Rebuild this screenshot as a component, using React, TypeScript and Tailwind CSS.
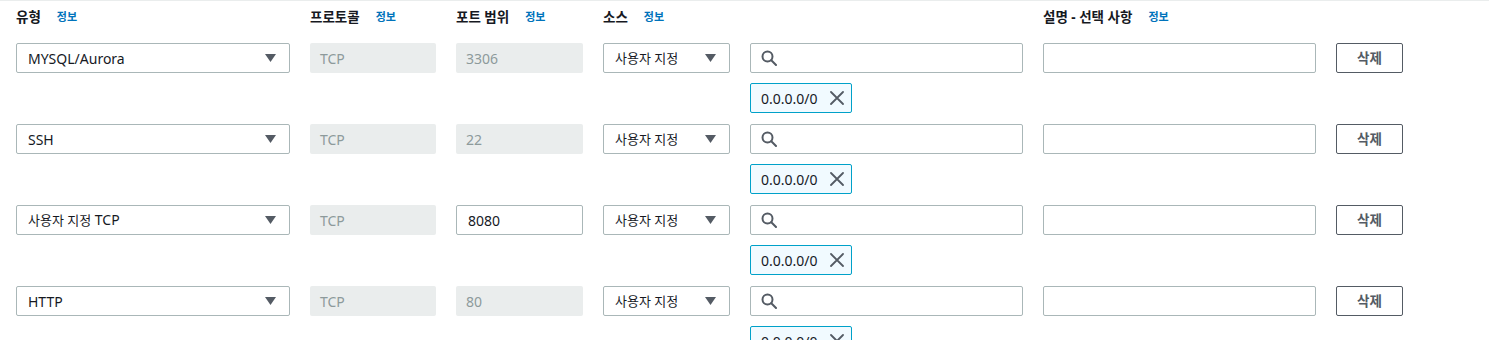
import React from 'react';

type Rule = {
    type: string;
    typeSuffix?: string;
    protocol: string;
    port: string;
    portEditable: boolean;
    cidr: string;
};

const rules: Rule[] = [
    { type: 'MYSQL/Aurora', protocol: 'TCP', port: '3306', portEditable: false, cidr: '0.0.0.0/0' },
    { type: 'SSH', protocol: 'TCP', port: '22', portEditable: false, cidr: '0.0.0.0/0' },
    { type: '사용자 지정', typeSuffix: 'TCP', protocol: 'TCP', port: '8080', portEditable: true, cidr: '0.0.0.0/0' },
    { type: 'HTTP', protocol: 'TCP', port: '80', portEditable: false, cidr: '0.0.0.0/0' },
];

const gridCols = 'grid grid-cols-[274px_126px_127px_127px_273px_273px_67px] gap-x-5';

const Caret = () => (
    <svg width="11" height="8" viewBox="0 0 11 8" className="shrink-0">
        <path d="M0 0 H11 L5.5 8 Z" fill="#545b64" />
    </svg>
);

const SearchIcon = () => (
    <svg width="17" height="16" viewBox="0 0 17 16" fill="none" stroke="#545b64" strokeWidth="2" strokeLinecap="round">
        <circle cx="6.5" cy="6.5" r="5" />
        <path d="M10.3 10.3 L15 15" />
    </svg>
);

const CloseIcon = () => (
    <svg width="14" height="14" viewBox="0 0 14 14" fill="none" stroke="#545b64" strokeWidth="1.8" strokeLinecap="round">
        <path d="M1 1 L13 13 M13 1 L1 13" />
    </svg>
);

const HeaderLabel = ({ label }: { label: string }) => (
    <div className="flex items-center gap-[16px]">
        <span className="text-[13.5px] font-bold text-[#16191f]">{label}</span>
        <span className="text-[11px] font-bold text-[#0073bb]">정보</span>
    </div>
);

const SelectBox = ({ value, suffix, korean }: { value: string; suffix?: string; korean?: boolean }) => (
    <div className="h-[30px] border border-[#aab7b8] rounded-[2px] bg-white flex items-center justify-between pl-[11px] pr-[13px] text-[14px] text-[#16191f]">
        <span>
            <span className={korean ? 'text-[13px]' : ''}>{value}</span>
            {suffix && <span> {suffix}</span>}
        </span>
        <Caret />
    </div>
);

const ReadOnlyBox = ({ value }: { value: string }) => (
    <div className="h-[30px] rounded-[2px] bg-[#eaeded] flex items-center px-[10px] text-[14px] text-[#8d9a9b]">
        {value}
    </div>
);

const TextBox = ({ value }: { value?: string }) => (
    <div className="h-[30px] border border-[#aab7b8] rounded-[2px] bg-white flex items-center px-[11px] text-[14px] text-[#16191f]">
        {value}
    </div>
);

export default function App() {
    return (
        <div className="w-[1489px] bg-white border-t border-[#eaeded] font-['Noto_Sans','Noto_Sans_CJK_KR',sans-serif]">
            <div className={`${gridCols} px-4 pt-[3px] h-[29px] items-center`}>
                <HeaderLabel label="유형" />
                <HeaderLabel label="프로토콜" />
                <HeaderLabel label="포트 범위" />
                <HeaderLabel label="소스" />
                <div />
                <HeaderLabel label="설명 - 선택 사항" />
                <div />
            </div>
            <div className="pt-[13px] flex flex-col gap-[11px]">
                {rules.map((rule, i) => (
                    <div key={i} className={`${gridCols} px-4 gap-y-[10px]`}>
                        <SelectBox value={rule.type} suffix={rule.typeSuffix} korean={!!rule.typeSuffix} />
                        <ReadOnlyBox value={rule.protocol} />
                        {rule.portEditable ? <TextBox value={rule.port} /> : <ReadOnlyBox value={rule.port} />}
                        <SelectBox value="사용자 지정" korean />
                        <div className="h-[30px] border border-[#aab7b8] rounded-[2px] bg-white flex items-center px-[10px]">
                            <SearchIcon />
                        </div>
                        <TextBox />
                        <button className="h-[30px] border border-[#545b64] rounded-[2px] bg-white text-[13.5px] font-bold text-[#545b64]">
                            삭제
                        </button>
                        <div className="col-start-5 flex">
                            <div className="h-[30px] border border-[#00a1c9] rounded-[2px] bg-[#f1faff] flex items-center pl-[10px] pr-[7px] gap-[12px] text-[14px] text-[#16191f]">
                                <span>{rule.cidr}</span>
                                <CloseIcon />
                            </div>
                        </div>
                    </div>
                ))}
            </div>
        </div>
    );
}
